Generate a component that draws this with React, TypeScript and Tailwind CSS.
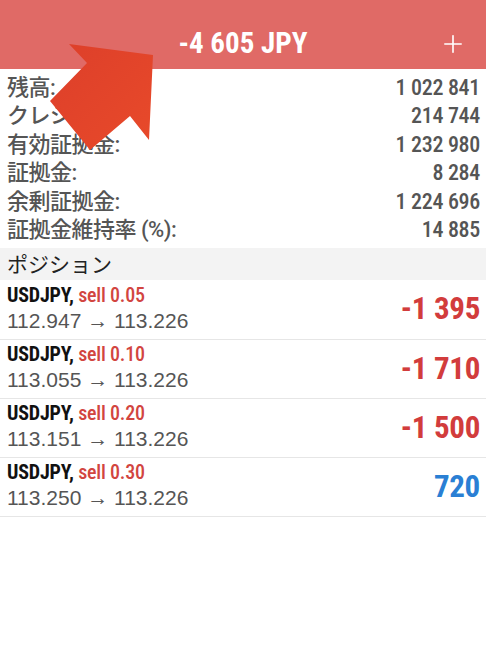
import { Plus } from "lucide-react";

const cond = "font-['Roboto_Condensed','Liberation_Sans_Narrow','DejaVu_Sans_Condensed',Roboto,sans-serif]";

export default function App() {
  const account = [
    { label: "残高:", value: "1 022 841" },
    { label: "クレジット:", value: "214 744" },
    { label: "有効証拠金:", value: "1 232 980" },
    { label: "証拠金:", value: "8 284" },
    { label: "余剰証拠金:", value: "1 224 696" },
    { label: "証拠金維持率 (%):", value: "14 885" },
  ];

  const positions = [
    { side: "sell 0.05", prices: "112.947 → 113.226", profit: "-1 395", loss: true },
    { side: "sell 0.10", prices: "113.055 → 113.226", profit: "-1 710", loss: true },
    { side: "sell 0.20", prices: "113.151 → 113.226", profit: "-1 500", loss: true },
    { side: "sell 0.30", prices: "113.250 → 113.226", profit: "720", loss: false },
  ];

  return (
    <div className="relative w-[486px] h-[667px] bg-white overflow-hidden font-['Roboto','Noto_Sans_CJK_JP',sans-serif]">
      {/* Header */}
      <div className="h-[69px] bg-[#e06a66] pt-[18px] flex items-center relative">
        <div className={`flex-1 text-center text-white text-[29px] font-bold ${cond}`}>-4 605 JPY</div>
        <Plus className="absolute right-[19px] top-[30px] w-[28px] h-[28px] text-white" strokeWidth={1.4} />
      </div>

      {/* Account */}
      <div className="pt-[4px] pb-[4px] pl-[7px] pr-[6px]">
        {account.map((row) => (
          <div key={row.label} className="h-[28.5px] flex items-center justify-between text-[#555]">
            <span className="text-[22px] font-medium tracking-[-0.5px] font-['Roboto','Noto_Sans_CJK_JP',sans-serif]">{row.label}</span>
            <span className={`text-[22px] font-medium tracking-[-0.3px] ${cond}`}>{row.value}</span>
          </div>
        ))}
      </div>

      {/* Section */}
      <div className="h-[32px] bg-[#f3f3f3] px-[7px] flex items-center text-[21px] text-[#222] font-['Noto_Sans_CJK_JP',sans-serif]">
        ポジション
      </div>

      {/* Positions */}
      <div className="border-b border-[#e6e6e6]">
        {positions.map((p, i) => (
          <div
            key={i}
            className={`h-[59px] pl-[7px] pr-[6px] flex items-center justify-between ${i > 0 ? "border-t border-[#e6e6e6]" : ""}`}
          >
            <div className="flex flex-col pb-[4px]">
              <div className={`text-[20px] leading-[25px] font-bold tracking-[-0.2px] ${cond}`}>
                <span className="text-[#111]">USDJPY, </span>
                <span className="text-[#d2453f] font-medium">{p.side}</span>
              </div>
              <div className="text-[21px] leading-[25px] text-[#555] font-['Liberation_Sans',sans-serif]">{p.prices}</div>
            </div>
            <div className={`text-[31px] font-bold tracking-[-0.3px] ${cond} ${p.loss ? "text-[#d23c3c]" : "text-[#2a7fd4]"}`}>
              {p.profit}
            </div>
          </div>
        ))}
      </div>

      {/* Overlay arrow */}
      <svg className="absolute left-0 top-0 pointer-events-none" width="486" height="667" viewBox="0 0 486 667">
        <defs>
          <linearGradient id="ar" x1="0" y1="0" x2="1" y2="1">
            <stop offset="0" stopColor="#dd3f2a" />
            <stop offset="1" stopColor="#e84a2a" />
          </linearGradient>
        </defs>
        <polygon points="69,44 153,55 149,140 130,116 90,150 50,101 87,63" fill="url(#ar)" />
      </svg>
    </div>
  );
}
